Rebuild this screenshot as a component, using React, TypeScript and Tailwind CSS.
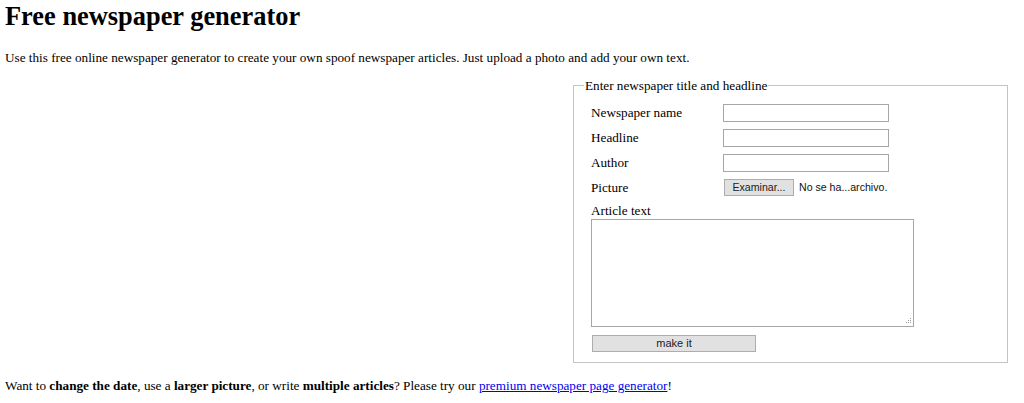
export default function App() {
  const label = "h-[25px] flex items-center";
  const inputCls =
    "w-[166px] h-[18px] border border-[#a6a6a6] bg-white outline-none";
  return (
    <div className="min-h-[403px] bg-white px-[5px] text-[13.2px] leading-[15px] text-black font-['Liberation_Serif',serif]">
      <h1 className="pt-[1px] text-[26.4px] leading-[30px] font-bold">
        Free newspaper generator
      </h1>
      <p className="mt-[19px]">
        Use this free online newspaper generator to create your own spoof
        newspaper articles. Just upload a photo and add your own text.
      </p>
      <div className="mt-[13px] flex justify-end pr-[11px]">
        <fieldset className="w-[435px] border border-[#c4c4c4] pl-[17px] pb-[10px]">
          <legend className="-ml-[7px] px-[1px] leading-[15px]">
            Enter newspaper title and headline
          </legend>
          <div className="mt-[7px] grid grid-cols-[132px_auto]">
            <div className={label}>Newspaper name</div>
            <div className={label}>
              <input type="text" className={inputCls} />
            </div>
            <div className={label}>Headline</div>
            <div className={label}>
              <input type="text" className={inputCls} />
            </div>
            <div className={label}>Author</div>
            <div className={label}>
              <input type="text" className={inputCls} />
            </div>
            <div className={label}>Picture</div>
            <div className={`${label} font-['Liberation_Sans',sans-serif] text-[10.6px]`}>
              <span className="ml-[1px] flex h-[17px] w-[70px] items-center justify-center border border-[#adadad] bg-[#e1e1e1] text-[#222]">
                Examinar...
              </span>
              <span className="ml-[5px] text-[#111]">No se ha...archivo.</span>
            </div>
          </div>
          <div className="mt-[3px] h-[16px]">Article text</div>
          <div className="relative w-[323px]">
            <textarea className="block h-[108px] w-[323px] resize-none border border-[#a6a6a6] bg-white outline-none" />
            <svg
              className="absolute bottom-[2px] right-[2px]"
              width="7"
              height="7"
              viewBox="0 0 7 7"
            >
              <g fill="#9a9a9a">
                <rect x="5" y="0" width="1" height="1" />
                <rect x="3" y="2" width="1" height="1" />
                <rect x="5" y="2" width="1" height="1" />
                <rect x="1" y="4" width="1" height="1" />
                <rect x="3" y="4" width="1" height="1" />
                <rect x="5" y="4" width="1" height="1" />
              </g>
            </svg>
          </div>
          <button
            type="button"
            className="mt-[8px] ml-[1px] flex h-[17px] w-[164px] items-center justify-center border border-[#adadad] bg-[#e1e1e1] font-['Liberation_Sans',sans-serif] text-[11px] text-[#222]"
          >
            make it
          </button>
        </fieldset>
      </div>
      <p className="mt-[15px]">
        Want to <b>change the date</b>, use a <b>larger picture</b>, or write{" "}
        <b>multiple articles</b>? Please try our{" "}
        <a href="#" className="text-[#0000ee] underline">
          premium newspaper page generator
        </a>
        !
      </p>
    </div>
  );
}
